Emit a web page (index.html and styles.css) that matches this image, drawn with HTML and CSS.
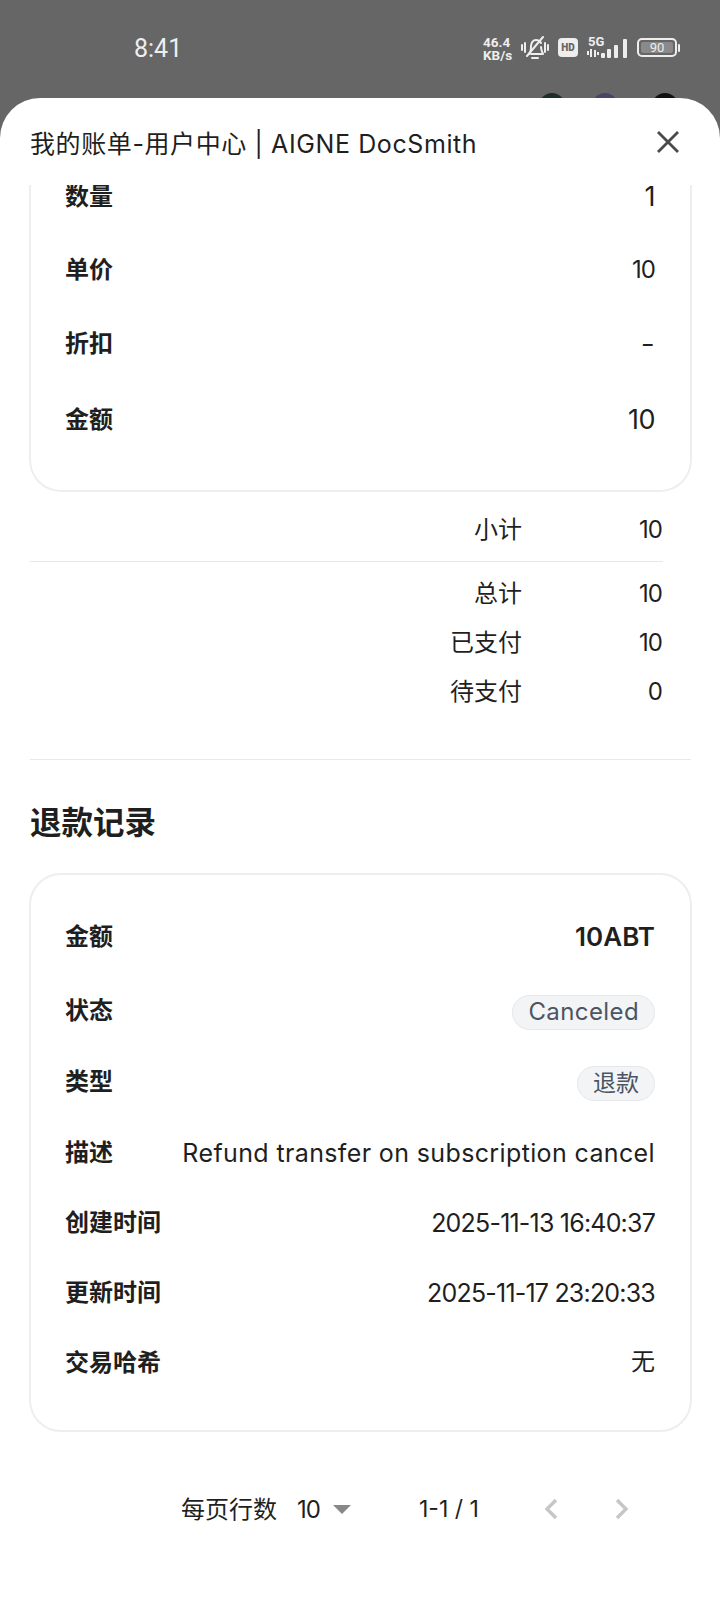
FILE: index.html
```html
<!DOCTYPE html>
<html lang="zh">
<head>
    <meta charset="utf-8">
    <title>我的账单-用户中心 | AIGNE DocSmith</title>
    <link rel="stylesheet" href="styles.css">
</head>
<body>
    <div class="statusbar">
        <span class="time">8:41</span>
        <div class="status-icons">
            <span class="speed">46.4<br>KB/s</span>
            <svg class="icon-bell" width="28" height="24" viewBox="0 0 28 24" fill="none" stroke="#eee" stroke-width="2" stroke-linecap="round" stroke-linejoin="round">
                <path d="M1 9v5M4 7v9M27 9v5M24 7v9"/>
                <path d="M8 18c2-2 2-5 2-8 0-3 2-6 5-6 2 0 4 1 5 3M20 11c0 3 1 5 2 7H10"/>
                <path d="M11 22h6"/>
                <path d="M6 20 22 1"/>
            </svg>
            <span class="hd">HD</span>
            <div class="network">
                <span class="five-g">5G</span>
                <svg width="42" height="21" viewBox="0 0 42 21" fill="#eee">
                    <rect x="0" y="13" width="2" height="4"/>
                    <rect x="3" y="11" width="2" height="8"/>
                    <rect x="7" y="12" width="2" height="7"/>
                    <rect x="10" y="14" width="2" height="3"/>
                    <rect x="14" y="15" width="4" height="5" rx="1"/>
                    <rect x="20" y="11" width="4" height="9" rx="1"/>
                    <rect x="27" y="7" width="4" height="13" rx="1"/>
                    <rect x="36" y="1" width="4" height="19" rx="1"/>
                </svg>
            </div>
            <div class="battery"><span class="battery-level">90</span></div>
            <span class="battery-tip"></span>
        </div>
        <span class="peek peek-green"></span>
        <span class="peek peek-purple"></span>
        <span class="peek peek-black"></span>
    </div>

    <div class="sheet">
        <div class="sheet-header">
            <span class="sheet-title">我的账单-用户中心 | AIGNE DocSmith</span>
            <svg width="24" height="24" viewBox="0 0 24 24" fill="none" stroke="#4a4a4a" stroke-width="2.8">
                <path d="M2 2 22 22M22 2 2 22"/>
            </svg>
        </div>

        <div class="card card-cut">
            <div class="row"><span class="label">数量</span><span class="big">1</span></div>
            <div class="row"><span class="label">单价</span><span class="num">10</span></div>
            <div class="row"><span class="label">折扣</span><span class="dash">-</span></div>
            <div class="row row-amount"><span class="label">金额</span><span class="big">10</span></div>
        </div>

        <div class="summary">
            <div class="sum-row"><span class="sum-label">小计</span><span class="sum-value">10</span></div>
            <div class="sum-line"></div>
            <div class="sum-row"><span class="sum-label">总计</span><span class="sum-value">10</span></div>
            <div class="sum-row"><span class="sum-label">已支付</span><span class="sum-value">10</span></div>
            <div class="sum-row"><span class="sum-label">待支付</span><span class="sum-value">0</span></div>
        </div>

        <div class="divider"></div>
        <h2 class="heading">退款记录</h2>

        <div class="card card-refund">
            <div class="row row-total"><span class="label">金额</span><span class="strong">10ABT</span></div>
            <div class="row row-pill"><span class="label">状态</span><span class="pill pill-latin">Canceled</span></div>
            <div class="row row-pill row-type"><span class="label">类型</span><span class="pill">退款</span></div>
            <div class="row"><span class="label">描述</span><span class="desc">Refund transfer on subscription cancel</span></div>
            <div class="row"><span class="label">创建时间</span><span class="date">2025-11-13 16:40:37</span></div>
            <div class="row"><span class="label">更新时间</span><span class="date">2025-11-17 23:20:33</span></div>
            <div class="row"><span class="label">交易哈希</span><span class="none">无</span></div>
        </div>

        <div class="pager">
            <span class="per-page">每页行数</span>
            <span class="page-size">10</span>
            <span class="caret"></span>
            <span class="page-range">1-1 / 1</span>
            <svg class="chev" width="14" height="22" viewBox="0 0 14 22" fill="none" stroke="#c6c6c6" stroke-width="3.4">
                <path d="M12 2 3 11l9 9"/>
            </svg>
            <svg class="chev chev-next" width="14" height="22" viewBox="0 0 14 22" fill="none" stroke="#c6c6c6" stroke-width="3.4">
                <path d="M2 2l9 9-9 9"/>
            </svg>
        </div>
    </div>
</body>
</html>
```

FILE: styles.css
```css
* {
    box-sizing: border-box;
}
html, body {
    margin: 0;
    height: 1600px;
    overflow: hidden;
}
body {
    width: 720px;
    background-color: #666666;
    font-family: "Inter", "Noto Sans CJK SC", sans-serif;
    color: #1f1f1f;
    font-size: 23px;
}
.statusbar {
    position: relative;
    height: 98px;
    display: flex;
    padding: 36px 40px 0 134px;
    justify-content: space-between;
    color: #eeeeee;
}
.time {
    font-size: 25px;
    line-height: 24px;
    margin-top: 1px;
    font-family: "Roboto", sans-serif;
}
.status-icons {
    display: flex;
    align-items: flex-start;
    height: 24px;
}
.speed {
    font-family: "Roboto", sans-serif;
    font-weight: 700;
    font-size: 13.5px;
    line-height: 13px;
    width: 38px;
}
.hd {
    width: 20px;
    height: 19px;
    margin: 2px 0 0 9px;
    background-color: #eeeeee;
    border-radius: 4px;
    color: #666666;
    font-family: "Roboto", sans-serif;
    font-weight: 900;
    font-size: 10px;
    line-height: 19px;
    text-align: center;
}
.network {
    position: relative;
    width: 42px;
    height: 22px;
    margin: 2px 0 0 9px;
}
.five-g {
    position: absolute;
    left: 1px;
    top: -2px;
    font-family: "Roboto", sans-serif;
    font-weight: 700;
    font-size: 13px;
    line-height: 12px;
}
.network svg {
    display: block;
}
.battery {
    width: 40px;
    height: 19px;
    margin: 2px 0 0 8px;
    border: 2px solid #eeeeee;
    border-radius: 5px;
    padding: 2px;
}
.battery-level {
    display: block;
    width: 32px;
    height: 11px;
    background-color: #8a8a8a;
    border-radius: 2px;
    font-family: "Roboto", sans-serif;
    font-size: 13px;
    line-height: 11px;
    text-align: center;
}
.battery-tip {
    width: 2px;
    height: 8px;
    margin: 8px 0 0 1px;
    background-color: #eeeeee;
    border-radius: 1px;
}
.peek {
    position: absolute;
    top: 93px;
    width: 26px;
    height: 26px;
    border-radius: 50%;
}
.peek-green {
    left: 539px;
    background-color: #1d2f2b;
}
.peek-purple {
    left: 592px;
    background-color: #4a4468;
}
.peek-black {
    left: 652px;
    background-color: #111111;
}
.sheet {
    position: relative;
    height: 1502px;
    background-color: #ffffff;
    border-radius: 40px 40px 0 0;
    padding: 0 28px 0 29px;
}
.sheet-header {
    height: 81px;
    display: flex;
    align-items: center;
    justify-content: space-between;
    padding: 6px 12px 0 1px;
}
.sheet-title {
    font-size: 25px;
    letter-spacing: 0.6px;
}
.card {
    border: 2px solid #eeeeee;
    border-radius: 32px;
    padding: 0 35px 0 34px;
}
.card-cut {
    border-top: none;
    border-radius: 0 0 32px 32px;
    height: 313px;
    clip-path: inset(6px 0 0 0);
}
.row {
    display: flex;
    align-items: center;
    justify-content: space-between;
    height: 34px;
    margin-bottom: 36px;
}
.card-cut .row {
    margin-bottom: 39.5px;
}
.card-cut .row-amount {
    margin-top: 42px;
}
.label {
    font-weight: 600;
    font-size: 24px;
    margin-bottom: 4px;
}
.num {
    font-size: 24px;
    letter-spacing: -1px;
}
.big {
    font-size: 27px;
    letter-spacing: -0.5px;
}
.dash {
    font-size: 32px;
    font-weight: 300;
}
.strong {
    font-weight: 600;
    font-size: 26px;
}
.desc {
    font-size: 25px;
    letter-spacing: 0.37px;
}
.date {
    font-size: 25px;
    letter-spacing: -0.8px;
}
.none {
    font-size: 24px;
    margin-bottom: 6px;
}
.pill {
    height: 35px;
    padding: 0 15px;
    border: 1px solid #e5e7eb;
    border-radius: 18px;
    background-color: #f3f4f6;
    color: #4b5563;
    font-size: 23px;
    line-height: 32px;
}
.pill-latin {
    font-size: 24px;
    letter-spacing: 0.4px;
}
.summary {
    padding: 20px 30px 0 0;
}
.sum-row {
    display: flex;
    justify-content: flex-end;
    align-items: center;
    height: 34px;
    margin-bottom: 15px;
}
.sum-label {
    width: 80px;
    text-align: right;
    white-space: nowrap;
    font-size: 24px;
    margin-bottom: 4px;
}
.sum-value {
    width: 140px;
    text-align: right;
    font-size: 24px;
    letter-spacing: -1px;
}
.sum-line {
    height: 1px;
    background-color: #e8e8e8;
    margin: 1px 0 14px 1px;
    width: 633px;
}
.divider {
    height: 1px;
    margin: 51px 1px 0 1px;
    background-color: #e8e8e8;
}
.heading {
    margin: 41px 0 28px 1px;
    font-size: 31.5px;
    line-height: 44px;
    font-weight: 700;
}
.card-refund {
    height: 559px;
    padding-top: 44px;
}
.row-total {
    margin-bottom: 42px;
}
.row-pill {
    height: 35px;
}
.row-pill .label {
    margin-bottom: 8px;
}
.row-type {
    margin-bottom: 34.5px;
}
.pager {
    display: flex;
    align-items: center;
    height: 34px;
    margin-top: 60px;
    padding-left: 152px;
}
.per-page {
    width: 96px;
    white-space: nowrap;
    font-size: 24px;
    margin-bottom: 4px;
}
.page-size {
    margin-left: 20px;
    width: 36px;
    font-size: 24px;
    letter-spacing: -1px;
}
.caret {
    width: 0;
    height: 0;
    border-left: 9px solid transparent;
    border-right: 9px solid transparent;
    border-top: 9px solid #888888;
}
.page-range {
    margin-left: 68px;
    width: 125px;
    white-space: nowrap;
}
.chev-next {
    margin-left: 57px;
}
```
